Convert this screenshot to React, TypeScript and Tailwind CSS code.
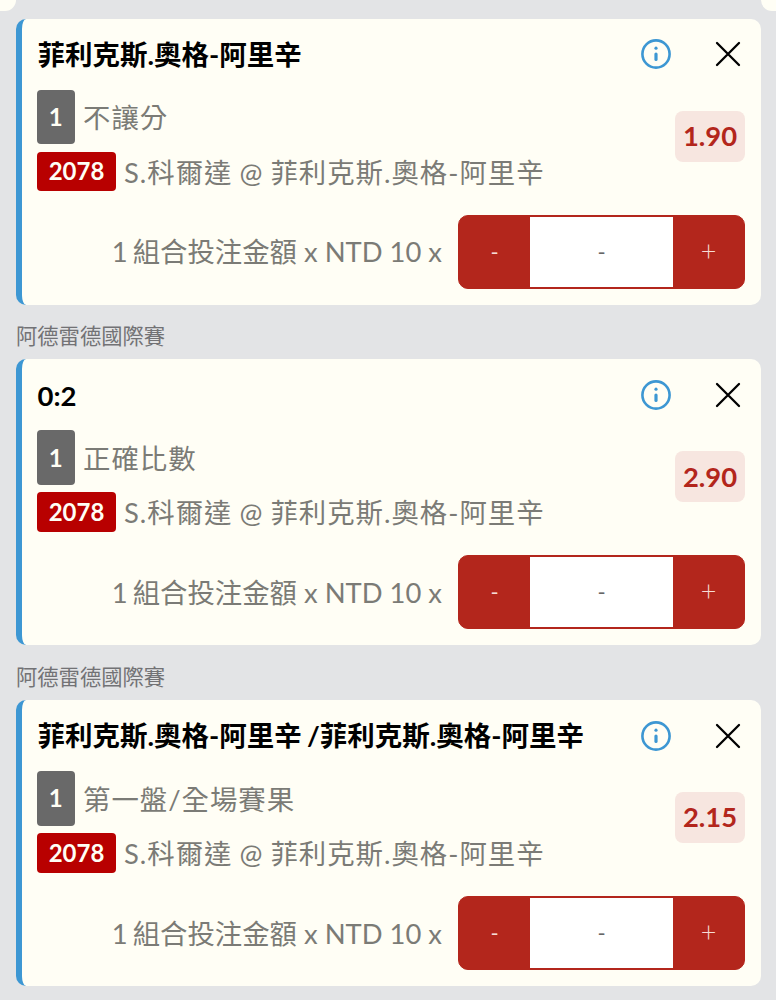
import { useState } from 'react'

interface Bet {
  id: number
  league?: string
  title: string
  market: string
  odds: string
}

const bets: Bet[] = [
  { id: 1, title: '菲利克斯.奧格-阿里辛', market: '不讓分', odds: '1.90' },
  { id: 2, league: '阿德雷德國際賽', title: '0:2', market: '正確比數', odds: '2.90' },
  {
    id: 3,
    league: '阿德雷德國際賽',
    title: '菲利克斯.奧格-阿里辛 /菲利克斯.奧格-阿里辛',
    market: '第一盤/全場賽果',
    odds: '2.15',
  },
]

function InfoIcon() {
  return (
    <svg className="h-[30px] w-[30px]" viewBox="0 0 30 30" fill="none" stroke="#3d97d3" strokeLinecap="round">
      <circle cx="15" cy="15" r="13.6" strokeWidth="2.6" />
      <path d="M15 15v5.4" strokeWidth="3.2" />
      <circle cx="15" cy="9.2" r="1.6" fill="#3d97d3" stroke="none" />
    </svg>
  )
}

function CloseIcon() {
  return (
    <svg className="h-[26px] w-[26px]" viewBox="0 0 26 26" fill="none" stroke="#000" strokeWidth={2.3} strokeLinecap="round">
      <path d="M2 2l22 22M24 2L2 24" />
    </svg>
  )
}

function Stepper() {
  const [amount, setAmount] = useState(0)

  return (
    <div className="flex h-[74px] w-[287px] overflow-hidden rounded-[10px] border border-[#b3261c] bg-[#b3261c] py-px text-center text-[22px]">
      <button onClick={() => setAmount(Math.max(0, amount - 1))} className="w-[71px] text-[#f6dcd5]">
        -
      </button>
      <div className="flex flex-1 items-center justify-center bg-white text-[#666]">{amount || '-'}</div>
      <button onClick={() => setAmount(amount + 1)} className="w-[71px] pb-[3px] text-[27px] font-light text-[#f6dcd5]">
        +
      </button>
    </div>
  )
}

function BetCard({ bet }: { bet: Bet }) {
  return (
    <div className="h-[286px] rounded-[10px] border-l-[6px] border-[#3d97d3] bg-[#fffef5] pr-4 pl-[15.5px]">
      {/* Title */}
      <div className="flex h-[71px] items-center pr-1">
        <h2 className="flex-1 pt-px text-[27.5px] font-bold whitespace-nowrap text-black [word-spacing:-1.5px]">{bet.title}</h2>
        <button className="mr-[44px]">
          <InfoIcon />
        </button>
        <button>
          <CloseIcon />
        </button>
      </div>

      {/* Market and odds */}
      <div className="flex items-start justify-between">
        <div className="text-[27.4px] tracking-[1px] text-[#7b7b76] [word-spacing:-1px]">
          <div className="flex h-[54.5px] items-center gap-[8.5px]">
            <span className="-ml-[0.5px] flex h-full w-[37.5px] items-center justify-center rounded-[4px] bg-[#696969] text-[24px] font-bold tracking-normal text-[#fffef5]">
              1
            </span>
            <span className="pt-[2px]">{bet.market}</span>
          </div>
          <div className="mt-[7.5px] flex h-[39.5px] items-center gap-[8px]">
            <span className="-ml-[0.5px] flex h-full w-[79px] items-center justify-center rounded-[4px] bg-[#b80000] text-[24px] font-bold tracking-normal text-[#fffef5]">
              2078
            </span>
            <span className="pt-[2px] whitespace-nowrap">S.科爾達 @ 菲利克斯.奧格-阿里辛</span>
          </div>
        </div>
        <div className="mt-[21px] flex h-[51px] w-[70px] items-center justify-center rounded-[8px] bg-[#f7e6e0] pb-px text-[27.4px] font-bold text-[#b3261c]">
          {bet.odds}
        </div>
      </div>

      {/* Stake */}
      <div className="mt-[23.7px] flex items-center justify-end gap-4">
        <span className="text-[27.4px] whitespace-nowrap text-[#7b7b76]">
          <span className="[word-spacing:-2px]">1 </span>組合投注金額 x NTD 10 x
        </span>
        <Stepper />
      </div>
    </div>
  )
}

export default function App() {
  return (
    <div className="h-[1000px] w-[776px] overflow-hidden bg-[#e3e4e6] font-[Lato,'Noto_Sans_CJK_TC',sans-serif] leading-none">
      {/* Bottom corners of the panel above */}
      <div className="flex h-[18.5px] items-start justify-between">
        <div className="h-[11px] w-4 rounded-br-[14px] bg-[#fffef5]" />
        <div className="h-[11px] w-[15px] rounded-bl-[14px] bg-[#fffef5]" />
      </div>
      <div className="pr-[15px] pl-4">
        {bets.map((bet) => (
          <div key={bet.id}>
            {bet.league && (
              <div className="flex h-[54.8px] items-center pt-[10px] text-[21.3px] text-[#727275]">{bet.league}</div>
            )}
            <BetCard bet={bet} />
          </div>
        ))}
      </div>
    </div>
  )
}
